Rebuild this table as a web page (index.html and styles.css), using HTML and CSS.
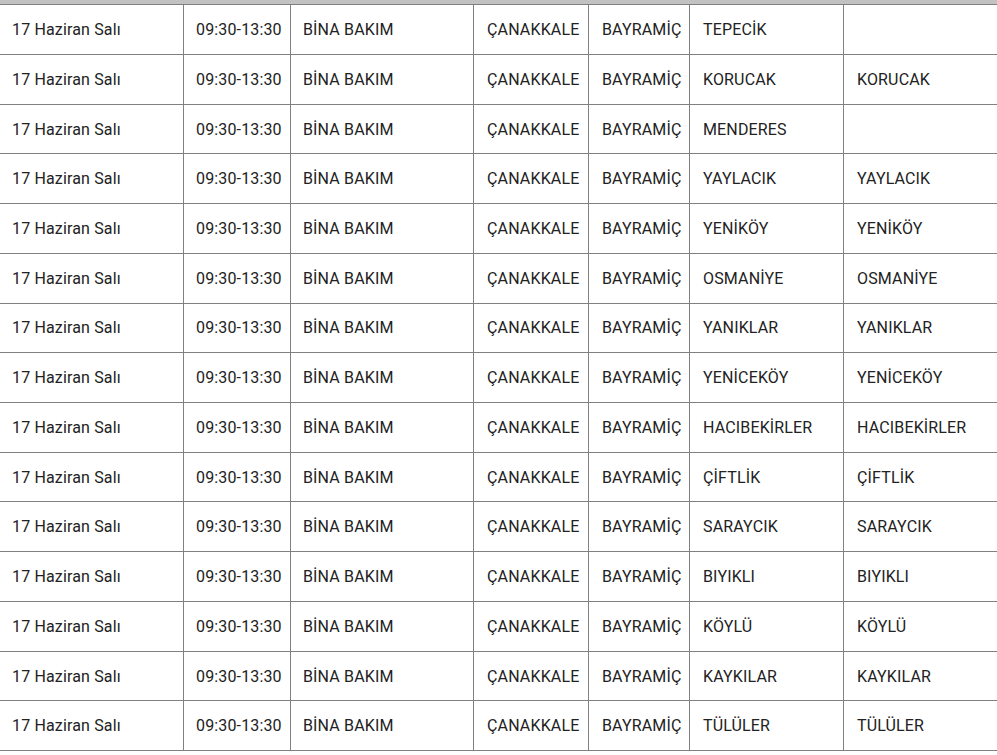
FILE: index.html
```html
<!DOCTYPE html>
<html lang="tr">
<head>
<meta charset="utf-8">
<title>Planlı Kesintiler</title>
<link rel="stylesheet" href="styles.css">
</head>
<body>
<div class="topbar"></div>
<div class="grid" role="table">
  <div class="row" role="row"><div class="c">17 Haziran Salı</div><div class="c">09:30-13:30</div><div class="c">BİNA BAKIM</div><div class="c">ÇANAKKALE</div><div class="c">BAYRAMİÇ</div><div class="c">TEPECİK</div><div class="c"></div></div>
  <div class="row" role="row"><div class="c">17 Haziran Salı</div><div class="c">09:30-13:30</div><div class="c">BİNA BAKIM</div><div class="c">ÇANAKKALE</div><div class="c">BAYRAMİÇ</div><div class="c">KORUCAK</div><div class="c">KORUCAK</div></div>
  <div class="row" role="row"><div class="c">17 Haziran Salı</div><div class="c">09:30-13:30</div><div class="c">BİNA BAKIM</div><div class="c">ÇANAKKALE</div><div class="c">BAYRAMİÇ</div><div class="c">MENDERES</div><div class="c"></div></div>
  <div class="row" role="row"><div class="c">17 Haziran Salı</div><div class="c">09:30-13:30</div><div class="c">BİNA BAKIM</div><div class="c">ÇANAKKALE</div><div class="c">BAYRAMİÇ</div><div class="c">YAYLACIK</div><div class="c">YAYLACIK</div></div>
  <div class="row" role="row"><div class="c">17 Haziran Salı</div><div class="c">09:30-13:30</div><div class="c">BİNA BAKIM</div><div class="c">ÇANAKKALE</div><div class="c">BAYRAMİÇ</div><div class="c">YENİKÖY</div><div class="c">YENİKÖY</div></div>
  <div class="row" role="row"><div class="c">17 Haziran Salı</div><div class="c">09:30-13:30</div><div class="c">BİNA BAKIM</div><div class="c">ÇANAKKALE</div><div class="c">BAYRAMİÇ</div><div class="c">OSMANİYE</div><div class="c">OSMANİYE</div></div>
  <div class="row" role="row"><div class="c">17 Haziran Salı</div><div class="c">09:30-13:30</div><div class="c">BİNA BAKIM</div><div class="c">ÇANAKKALE</div><div class="c">BAYRAMİÇ</div><div class="c">YANIKLAR</div><div class="c">YANIKLAR</div></div>
  <div class="row" role="row"><div class="c">17 Haziran Salı</div><div class="c">09:30-13:30</div><div class="c">BİNA BAKIM</div><div class="c">ÇANAKKALE</div><div class="c">BAYRAMİÇ</div><div class="c">YENİCEKÖY</div><div class="c">YENİCEKÖY</div></div>
  <div class="row" role="row"><div class="c">17 Haziran Salı</div><div class="c">09:30-13:30</div><div class="c">BİNA BAKIM</div><div class="c">ÇANAKKALE</div><div class="c">BAYRAMİÇ</div><div class="c">HACIBEKİRLER</div><div class="c">HACIBEKİRLER</div></div>
  <div class="row" role="row"><div class="c">17 Haziran Salı</div><div class="c">09:30-13:30</div><div class="c">BİNA BAKIM</div><div class="c">ÇANAKKALE</div><div class="c">BAYRAMİÇ</div><div class="c">ÇİFTLİK</div><div class="c">ÇİFTLİK</div></div>
  <div class="row" role="row"><div class="c">17 Haziran Salı</div><div class="c">09:30-13:30</div><div class="c">BİNA BAKIM</div><div class="c">ÇANAKKALE</div><div class="c">BAYRAMİÇ</div><div class="c">SARAYCIK</div><div class="c">SARAYCIK</div></div>
  <div class="row" role="row"><div class="c">17 Haziran Salı</div><div class="c">09:30-13:30</div><div class="c">BİNA BAKIM</div><div class="c">ÇANAKKALE</div><div class="c">BAYRAMİÇ</div><div class="c">BIYIKLI</div><div class="c">BIYIKLI</div></div>
  <div class="row" role="row"><div class="c">17 Haziran Salı</div><div class="c">09:30-13:30</div><div class="c">BİNA BAKIM</div><div class="c">ÇANAKKALE</div><div class="c">BAYRAMİÇ</div><div class="c">KÖYLÜ</div><div class="c">KÖYLÜ</div></div>
  <div class="row" role="row"><div class="c">17 Haziran Salı</div><div class="c">09:30-13:30</div><div class="c">BİNA BAKIM</div><div class="c">ÇANAKKALE</div><div class="c">BAYRAMİÇ</div><div class="c">KAYKILAR</div><div class="c">KAYKILAR</div></div>
  <div class="row" role="row"><div class="c">17 Haziran Salı</div><div class="c">09:30-13:30</div><div class="c">BİNA BAKIM</div><div class="c">ÇANAKKALE</div><div class="c">BAYRAMİÇ</div><div class="c">TÜLÜLER</div><div class="c">TÜLÜLER</div></div>
</div>
</body>
</html>
```
FILE: styles.css
```css
html, body {
  margin: 0;
  padding: 0;
  background: #ffffff;
  overflow: hidden;
}
body {
  font-family: Roboto, "Liberation Sans", sans-serif;
  font-size: 16px;
  letter-spacing: 0.15px;
  color: #222222;
}
.topbar {
  height: 4.3px;
  background: #c2c2c2;
}
.grid {
  display: flex;
  flex-direction: column;
  width: 1010px;
  border-top: 1px solid #808080;
}
.row {
  display: grid;
  grid-template-columns: 184px 107px 183px 115px 101px 154px 1fr;
  height: 49.73px;
}
.c {
  box-sizing: border-box;
  display: flex;
  align-items: center;
  padding: 0 8px 0 12px;
  border-right: 1px solid #808080;
  border-bottom: 1px solid #808080;
  white-space: nowrap;
  overflow: hidden;
}
.c:nth-child(n+4) {
  padding-left: 13px;
}
```
